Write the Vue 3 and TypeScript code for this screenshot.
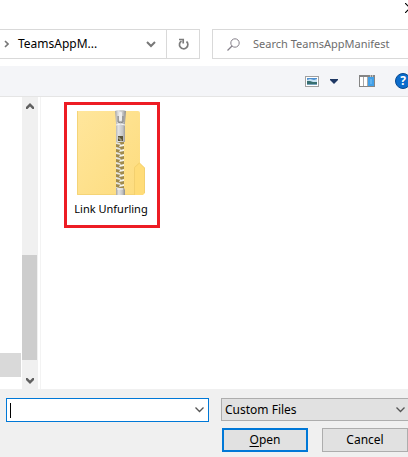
<script setup lang="ts">
import { ref } from 'vue'

const fileName = ref('')
const search = ref('')
const fileType = ref('Custom Files')
const files = ['Link Unfurling']
const teeth = Array.from({ length: 10 }, (_, i) => 32 + i * 5)
</script>

<template>
  <main class="dialog">
    <header class="title">
      <button class="close" aria-label="Close">
        <svg width="10" height="10" viewBox="0 0 10 10"><path d="M0 0L10 10M10 0L0 10" stroke="#000" stroke-width="1.2" /></svg>
      </button>
    </header>

    <nav class="navigation">
      <div class="address">
        <svg class="crumb-arrow" width="5" height="8" viewBox="0 0 5 8"><path d="M1 1L4 4L1 7" fill="none" stroke="#777" stroke-width="1.6" /></svg>
        <a class="crumb" href="#">TeamsAppM...</a>
        <button class="history" aria-label="Previous locations">
          <svg width="10" height="7" viewBox="0 0 10 7"><path d="M1 1L5 5L9 1" fill="none" stroke="#777" stroke-width="2" /></svg>
        </button>
        <button class="refresh" aria-label="Refresh">
          <svg width="11" height="12" viewBox="0 0 11 12">
            <path d="M8.500 3.500A4.200 4.200 0 1 1 3.500 3" fill="none" stroke="#7c7c7c" stroke-width="1.700" />
            <path d="M1 1.500H5.200V5.500" fill="none" stroke="#7c7c7c" stroke-width="1.700" />
          </svg>
        </button>
      </div>
      <label class="search">
        <svg width="13" height="13" viewBox="0 0 13 13"><circle cx="8" cy="5" r="4.2" fill="none" stroke="#85808a" /><path d="M5 8L0.5 12.5" stroke="#85808a" stroke-width="1.2" /></svg>
        <input v-model="search" type="text" placeholder="Search TeamsAppManifest" aria-label="Search TeamsAppManifest" />
      </label>
    </nav>

    <div class="toolbar">
      <button class="view" aria-label="Change your view">
        <svg width="14" height="11" viewBox="0 0 14 11">
          <rect x=".5" y=".5" width="13" height="10" fill="#fff" stroke="#a0a0a0" />
          <rect x="2" y="2" width="10" height="3" fill="#4d8fd0" />
          <path d="M2 4L5 3L9 4L12 3V6H2Z" fill="#c8e2f2" />
          <path d="M2 5L5 5L8 6H12V8H2Z" fill="#386f70" />
          <rect x="2" y="8" width="10" height="1" fill="#78a4bd" />
        </svg>
      </button>
      <button class="view-more" aria-label="More views">
        <svg width="8" height="5" viewBox="0 0 8 5"><path d="M0 0H8V1L4 5L0 1Z" fill="#1f3864" /></svg>
      </button>
      <button class="pane" aria-label="Show the preview pane">
        <svg width="16" height="12" viewBox="0 0 16 12">
          <rect x=".5" y=".5" width="15" height="11" fill="#fff" stroke="#858585" />
          <rect width="16" height="2" fill="#858585" />
          <path d="M11 1H12M13 1H14" stroke="#fff" />
          <path d="M4.500 2V11M8.500 2V11" stroke="#aaa" />
          <rect x="9" y="2" width="6" height="9" fill="#42a0e8" />
          <path d="M12 4V9" stroke="#7ec2f4" />
        </svg>
      </button>
      <button class="help" aria-label="Get help">?</button>
    </div>

    <section class="browser">
      <aside class="tree"><div class="tree-item"></div></aside>
      <div class="scrollbar">
        <svg width="8" height="6" viewBox="0 0 8 6"><path d="M0 6V4L4 0L8 4V6H6.500L4 3.500L1.500 6Z" fill="#606060" /></svg>
        <div class="track"><div class="thumb"></div></div>
        <svg width="8" height="6" viewBox="0 0 8 6"><path d="M0 0V2L4 6L8 2V0H6.500L4 2.500L1.500 0Z" fill="#606060" /></svg>
      </div>
      <div class="files">
        <button v-for="file in files" :key="file" class="file">
          <svg width="68" height="86" viewBox="0 0 68 86">
            <defs>
              <linearGradient id="folder" x1="0" y1="0" x2="1" y2="1"><stop stop-color="#ffe69c" /><stop offset="1" stop-color="#fddc7e" /></linearGradient>
              <linearGradient id="metal"><stop stop-color="#a5a5a5" /><stop offset=".3" stop-color="#e2e2e2" /><stop offset=".7" stop-color="#c5c5c5" /><stop offset="1" stop-color="#8c8c8c" /></linearGradient>
            </defs>
            <path d="M0 1H61Q63 1 63 3V85H0Z" fill="url(#folder)" />
            <path d="M.5 1V84.500H63" fill="none" stroke="#f5d477" />
            <path d="M57 85V57L62 52.500L68 58V83L66 85Z" fill="#ffdc78" />
            <path d="M57.500 85V57.500L62.500 53L67.500 58V83" fill="none" stroke="#f3d06f" />
            <rect x="39" y="31" width="8" height="48" fill="#a08a4c" />
            <g v-for="y in teeth" :key="y">
              <path :d="`M39 ${y}L43 ${y + 1}L44 ${y + 3}L39 ${y + 2}Z`" fill="#e4e4e0" />
              <path :d="`M47 ${y + 2}L43 ${y + 3}L42 ${y + 5}L47 ${y + 4}Z`" fill="#f4f4ee" />
            </g>
            <path d="M39 78H47L48 80V85H39Z" fill="url(#metal)" />
            <path d="M40 79H46" stroke="#f4f4f4" />
            <path d="M38 1Q43 -1 49 1L48 13V32H39V13Z" fill="url(#metal)" />
            <path d="M41 6V12Q43.500 14 46 12V6" fill="#b4b4b4" stroke="#858585" />
            <rect x="42" y="2" width="3" height="9" rx="1" fill="#eee" />
            <path d="M39 15Q43.500 13 48 15" fill="none" stroke="#f5f5f5" />
            <rect x="41" y="26" width="5" height="5" fill="#5c5438" />
            <path d="M41 28H43V30H45" fill="none" stroke="#b6b29d" />
          </svg>
          <span>{{ file }}</span>
        </button>
      </div>
    </section>

    <footer class="footer">
      <div class="filename">
        <span class="caret"></span>
        <input v-model="fileName" type="text" aria-label="File name" />
        <button aria-label="Show file names">
          <svg width="9" height="6" viewBox="0 0 9 6"><path d="M.5 .5L4.500 4.500L8.500 .5" fill="none" stroke="#555" stroke-width="1.3" /></svg>
        </button>
      </div>
      <div class="filetype">
        <select v-model="fileType" aria-label="File type"><option>Custom Files</option></select>
        <svg width="9" height="6" viewBox="0 0 9 6"><path d="M.5 .5L4.500 4.500L8.500 .5" fill="none" stroke="#555" stroke-width="1.3" /></svg>
      </div>
      <div class="actions">
        <button class="action primary"><u>O</u>pen</button>
        <button class="action">Cancel</button>
      </div>
    </footer>
  </main>
</template>

<style>
body {
  background: #fff;
}
</style>

<style scoped>
.dialog {
  display: flex;
  flex-direction: column;
  min-height: 100vh;
  overflow: hidden;
  color: #000;
  font: 11px/16px "Noto Sans", "Open Sans", sans-serif;
}
.dialog * {
  box-sizing: border-box;
}
button,
input,
select {
  margin: 0;
  padding: 0;
  border: 0;
  border-radius: 0;
  outline: 0;
  background: transparent;
  color: inherit;
  font: inherit;
}
svg {
  display: block;
  flex: none;
}
.title {
  display: flex;
  justify-content: flex-end;
  height: 29px;
  padding-top: 3px;
}
.close {
  height: 10px;
  margin-right: -7px;
}
.navigation {
  display: grid;
  grid-template-columns: 200px 1fr;
  gap: 12px;
  height: 37px;
  padding-bottom: 7px;
}
.address {
  display: flex;
  align-items: center;
  padding-left: 4px;
  border: 1px solid #d9d9d9;
  border-left: 0;
}
.crumb {
  flex: 1;
  margin-left: 9px;
  color: #000;
  font-size: 12px;
  text-decoration: none;
}
.history {
  display: grid;
  place-items: center;
  width: 30px;
  height: 28px;
}
.refresh {
  display: grid;
  place-items: center;
  width: 33px;
  height: 28px;
  border-left: 1px solid #d9d9d9;
}
.search {
  display: flex;
  align-items: center;
  gap: 13px;
  min-width: 0;
  padding-left: 14px;
  border: 1px solid #d9d9d9;
  border-right: 0;
}
.search input {
  flex: 1;
  min-width: 0;
}
.search input::placeholder {
  color: #6d6d6d;
  opacity: 1;
}
.toolbar {
  display: flex;
  align-items: center;
  justify-content: flex-end;
  height: 31px;
  border-bottom: 1px solid #e5e5e5;
  background: #f4f5f8;
}
.view {
  margin-right: 11px;
}
.view-more {
  margin-right: 21px;
}
.pane {
  margin-right: 20px;
}
.help {
  flex: none;
  width: 16px;
  height: 16px;
  margin-right: -3px;
  border: 1px solid #07488f;
  border-radius: 50%;
  background: #0b6ccc;
  color: #fff;
  font-size: 12px;
  font-weight: 700;
  line-height: 14px;
}
.browser {
  display: flex;
  flex: 1;
  min-height: 240px;
}
.tree {
  display: flex;
  flex-direction: column;
  justify-content: flex-end;
  width: 22px;
  padding: 0 1px 12px 0;
}
.tree-item {
  height: 24px;
  background: #d9d9d9;
}
.scrollbar {
  display: flex;
  flex-direction: column;
  align-items: center;
  width: 16px;
  padding: 6px 0 5px;
  background: #f0f0f0;
}
.track {
  display: flex;
  flex: 1;
  flex-direction: column;
  justify-content: flex-end;
  width: 100%;
  padding: 0 1px 18px 0;
}
.thumb {
  height: 105px;
  background: #cdcdcd;
}
.files {
  flex: 1;
  margin-left: 2px;
  padding: 5px 23px;
  border-left: 1px solid #f3f3f3;
}
.file {
  display: flex;
  flex-direction: column;
  align-items: center;
  gap: 5px;
  width: 96px;
  height: 126px;
  padding: 5px 2px 0 0;
  border: 3px solid #ed1c24;
  white-space: nowrap;
}
.footer {
  display: grid;
  grid-template-columns: 203px 1fr;
  gap: 6px 12px;
  padding: 9px 0 5px 6px;
  background: #f0f0f0;
  font-size: 12px;
}
.filename {
  display: flex;
  align-items: center;
  height: 24px;
  padding: 0 4px 0 3px;
  border: 1px solid #0078d7;
  background: #fff;
}
.caret {
  width: 1px;
  height: 15px;
  background: #000;
}
.filename input {
  flex: 1;
  min-width: 0;
  caret-color: transparent;
}
.filetype {
  display: grid;
  grid-template-columns: 1fr 12px;
  align-items: center;
  height: 23px;
  border: 1px solid #adadad;
  border-right: 0;
  background: #e1e1e1;
}
.filetype select {
  grid-area: 1 / 1 / 2 / 3;
  width: 100%;
  padding-left: 3px;
  appearance: none;
}
.filetype svg {
  grid-area: 1 / 2;
  pointer-events: none;
}
.actions {
  display: flex;
  grid-column: 1 / 3;
  justify-content: flex-end;
  gap: 14px;
}
.action {
  width: 86px;
  height: 24px;
  border: 1px solid #adadad;
  background: #e1e1e1;
}
.primary {
  border: 2px solid #0078d7;
}
u {
  text-underline-offset: 2px;
}
</style>
